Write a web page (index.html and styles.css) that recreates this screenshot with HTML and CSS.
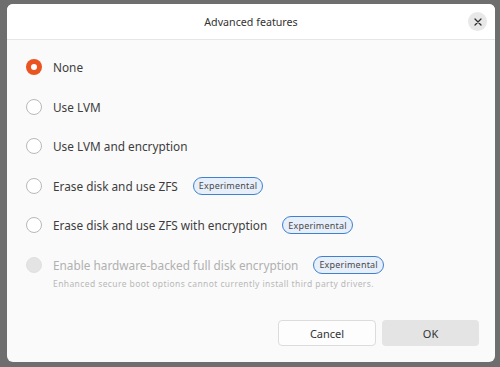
FILE: index.html
```html
<!DOCTYPE html>
<html>
<head>
<meta charset="utf-8">
<link rel="stylesheet" href="styles.css">
</head>
<body>
<div class="dialog">
  <div class="header">
    <span class="title">Advanced features</span>
    <button class="close" aria-label="Close">
      <svg width="10" height="10" viewBox="0 0 10 10"><path d="M2 2 L8 8 M8 2 L2 8" stroke="#2e2e2e" stroke-width="1.3" stroke-linecap="round"/></svg>
    </button>
  </div>
  <div class="content">
    <div class="options">
      <div class="option"><span class="radio checked"></span><span class="label">None</span></div>
      <div class="option"><span class="radio"></span><span class="label">Use LVM</span></div>
      <div class="option"><span class="radio"></span><span class="label">Use LVM and encryption</span></div>
      <div class="option"><span class="radio"></span><span class="label">Erase disk and use ZFS</span><span class="badge">Experimental</span></div>
      <div class="option"><span class="radio"></span><span class="label">Erase disk and use ZFS with encryption</span><span class="badge">Experimental</span></div>
      <div class="option-group">
        <div class="option disabled"><span class="radio"></span><span class="label">Enable hardware-backed full disk encryption</span><span class="badge">Experimental</span></div>
        <div class="desc">Enhanced secure boot options cannot currently install third party drivers.</div>
      </div>
    </div>
    <div class="footer">
      <button class="btn cancel">Cancel</button>
      <button class="btn ok">OK</button>
    </div>
  </div>
</div>
</body>
</html>
```
FILE: styles.css
```css
html, body {
  margin: 0;
  padding: 0;
}
body {
  width: 500px;
  height: 367px;
  background: #6e6e6e;
  font-family: "Noto Sans", "Open Sans", sans-serif;
  overflow: hidden;
}
.dialog {
  margin: 4px 0 0 7px;
  width: 488px;
  height: 358px;
  background: #fafafa;
  border-radius: 6px;
  display: flex;
  flex-direction: column;
  overflow: hidden;
}
.header {
  height: 35px;
  background: #ffffff;
  border-bottom: 1px solid #e6e6e6;
  display: flex;
  align-items: center;
  justify-content: center;
  position: relative;
}
.title {
  font-size: 10.7px;
  color: #333;
}
.close {
  position: absolute;
  right: 8px;
  top: 8px;
  width: 19px;
  height: 19px;
  border-radius: 50%;
  border: none;
  background: #e8e8e8;
  padding: 0;
  display: flex;
  align-items: center;
  justify-content: center;
}
.content {
  flex: 1;
  display: flex;
  flex-direction: column;
  padding: 17px 16px 16px 19px;
}
.options {
  display: flex;
  flex-direction: column;
  gap: 19.6px;
}
.option {
  height: 20px;
  display: flex;
  align-items: center;
}
.radio {
  width: 14px;
  height: 14px;
  border-radius: 50%;
  border: 1px solid #b8b8b8;
  background: #fff;
  box-sizing: content-box;
  flex: none;
  position: relative;
}
.radio.checked {
  border: none;
  width: 16px;
  height: 16px;
  background: #e95420;
}
.radio.checked::after {
  content: "";
  position: absolute;
  left: 5px;
  top: 5px;
  width: 6px;
  height: 6px;
  border-radius: 50%;
  background: #fff;
}
.label {
  margin-left: 11px;
  font-size: 11.8px;
  color: #3d3d3d;
}
.badge {
  margin-left: 15px;
  height: 18px;
  box-sizing: border-box;
  padding: 0 5px;
  border: 1px solid #3f81cf;
  background: #e7effa;
  border-radius: 9px;
  font-size: 9px;
  color: #4a4a4a;
  display: flex;
  align-items: center;
  letter-spacing: 0.2px;
}
.option.disabled .radio {
  background: #e4e4e4;
  border-color: #e0e0e0;
}
.option.disabled .label {
  color: #b0b0b0;
}
.desc {
  margin-left: 27px;
  margin-top: 3px;
  font-size: 8.5px;
  color: #b8b8b8;
  letter-spacing: 0.4px;
}
.footer {
  margin-top: auto;
  display: flex;
  justify-content: flex-end;
  gap: 6px;
}
.btn {
  height: 26px;
  border-radius: 4px;
  font-family: inherit;
  font-size: 11px;
  color: #333;
  padding: 0;
}
.cancel {
  width: 98px;
  background: #fdfdfd;
  border: 1px solid #dcdcdc;
}
.ok {
  width: 97px;
  background: #e4e4e4;
  border: none;
}
```
